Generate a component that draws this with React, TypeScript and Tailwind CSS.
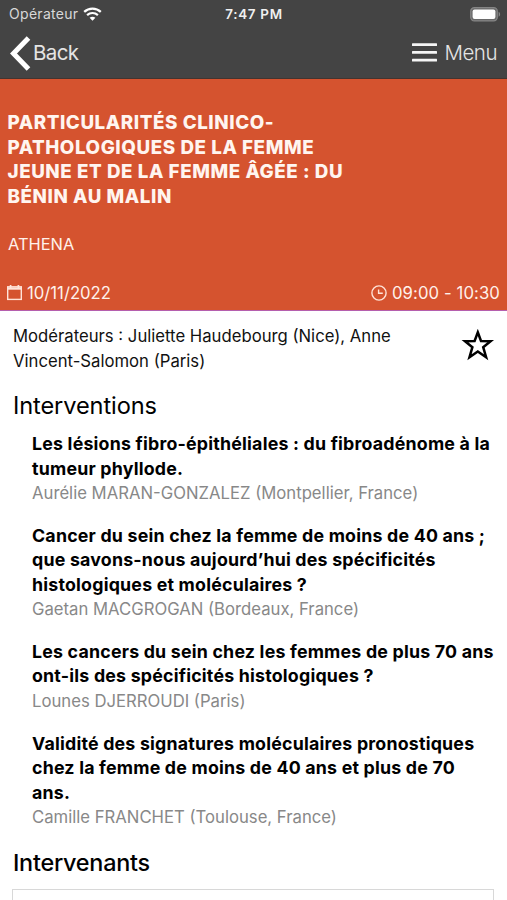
import * as React from 'react';

interface Talk {
  lines: string[];
  speaker: string;
}

const talks: Talk[] = [
  {
    lines: ['Les lésions fibro-épithéliales : du fibroadénome à la', 'tumeur phyllode.'],
    speaker: 'Aurélie MARAN-GONZALEZ (Montpellier, France)',
  },
  {
    lines: [
      'Cancer du sein chez la femme de moins de 40 ans ;',
      'que savons-nous aujourd’hui des spécificités',
      'histologiques et moléculaires ?',
    ],
    speaker: 'Gaetan MACGROGAN (Bordeaux, France)',
  },
  {
    lines: ['Les cancers du sein chez les femmes de plus 70 ans', 'ont-ils des spécificités histologiques ?'],
    speaker: 'Lounes DJERROUDI (Paris)',
  },
  {
    lines: ['Validité des signatures moléculaires pronostiques', 'chez la femme de moins de 40 ans et plus de 70', 'ans.'],
    speaker: 'Camille FRANCHET (Toulouse, France)',
  },
];

function StatusBar() {
  return (
    <div className="grid h-7 grid-cols-3 items-center pl-[9px] pr-[6px] text-[13px]">
      <div className="flex items-center gap-[5px] text-[#d8d8d8]">
        <span className="text-[14px] tracking-[0.3px]">Opérateur</span>
        <svg width="19" height="14" viewBox="0 0 19 14" fill="none" stroke="#fff">
          <path d="M1.2 4.9C5.9.6 13.1.6 17.8 4.9" strokeWidth="2.3" />
          <path d="M4.1 8.1c3.1-2.8 7.7-2.8 10.8 0" strokeWidth="2.2" />
          <path d="M9.5 13.7 6.6 10.8c1.7-1.5 4.1-1.5 5.8 0z" fill="#fff" stroke="none" />
        </svg>
      </div>
      <div className="-ml-[2px] text-center text-[13.4px] font-semibold tracking-[0.7px] text-[#f0f0f0]">7:47 PM</div>
      <div className="flex justify-end">
        <svg width="31" height="15" viewBox="0 0 31 15">
          <rect x=".7" y=".7" width="26.6" height="13.2" rx="3.6" fill="#6a6a6a" stroke="#858585" strokeWidth="1.2" />
          <rect x="2.6" y="2.6" width="22.8" height="9.4" rx="2" fill="#fff" />
          <path d="M28.6 4.8c2 .8 2 4.2 0 5z" fill="#858585" />
        </svg>
      </div>
    </div>
  );
}

function NavBar() {
  return (
    <div className="flex h-[50px] items-center justify-between px-[10px] text-[20.5px] text-[#e4e4e4]">
      <div className="flex items-center gap-[2px]">
        <svg width="21" height="35" viewBox="0 0 21 35" fill="none" stroke="#fff" strokeWidth="5">
          <path d="M18.5 2 3.5 17.5 18.5 33" />
        </svg>
        <span className="tracking-[-0.6px]">Back</span>
      </div>
      <div className="flex items-center gap-[8px]">
        <svg className="-mt-px" width="25" height="19" viewBox="0 0 25 19" fill="#f5f5f5">
          <rect width="25" height="2.7" y=".3" rx=".5" />
          <rect width="25" height="2.7" y="8" rx=".5" />
          <rect width="25" height="2.7" y="15.8" rx=".5" />
        </svg>
        <span className="font-light tracking-[-0.5px]">Menu</span>
      </div>
    </div>
  );
}

export default function App() {
  return (
    <div className="h-[900px] w-[507px] overflow-hidden whitespace-nowrap bg-white font-['Inter','Liberation_Sans',sans-serif] text-[16.7px] leading-[24.5px] text-[#111]">
      <header className="h-[79px] border-b border-[#44342f] bg-[#444]">
        <StatusBar />
        <NavBar />
      </header>

      <section className="h-[232px] border-b border-[#b55fae] bg-[#d5532f] pl-2 pr-[7px] pt-8 text-[#fff1eb]">
        <h1 className="-ml-[0.5px] text-[18.8px] font-extrabold tracking-[0.56px] text-[#fff5f0]">
          PARTICULARITÉS CLINICO-
          <br />
          PATHOLOGIQUES DE LA FEMME
          <br />
          JEUNE ET DE LA FEMME ÂGÉE : DU
          <br />
          BÉNIN AU MALIN
        </h1>
        <p className="mt-[23px] text-[16.4px]">ATHENA</p>
        <div className="mt-[24px] flex justify-between">
          <div className="flex items-center gap-[5px]">
            <svg className="-ml-px" width="15" height="17" viewBox="0 0 15 17" fill="none" stroke="#ffe3d8">
              <rect x=".7" y="2.8" width="13.6" height="12.6" strokeWidth="1.4" />
              <path d="M.7 4.5h13.6" strokeWidth="2.4" />
              <path d="M3.6 1v3.5M11.4 1v3.5" strokeWidth="1.7" />
            </svg>
            <span>10/11/2022</span>
          </div>
          <div className="flex items-center gap-[5px]">
            <svg width="16" height="16" viewBox="0 0 16 16" fill="none" stroke="#ffe3d8" strokeWidth="1.4">
              <circle cx="8" cy="8" r="7.1" />
              <path d="M7.6 4.4v3.8h4.2" />
            </svg>
            <span className="tracking-[0.1px]">09:00 - 10:30</span>
          </div>
        </div>
      </section>

      <main className="px-[13px] pt-[13px]">
        <div className="flex justify-between">
          <p>
            Modérateurs : Juliette Haudebourg (Nice), Anne
            <br />
            Vincent-Salomon (Paris)
          </p>
          <svg className="mt-[4px] -mr-px" width="34" height="34" viewBox="0 0 34 34" fill="none" stroke="#000" strokeWidth="2.5">
            <path d="M16.8 4.3 20 13 29.6 13.2 22.2 19.2 25.1 29.2 16.8 23.5 8.5 29.2 11.4 19.2 4 13.2 13.6 13z" />
          </svg>
        </div>

        <h2 className="mt-[18px] text-[23.6px] leading-[30px] tracking-[-0.1px] text-black">Interventions</h2>
        <ul className="mt-[11px] flex flex-col gap-[18.2px] pl-[19px]">
          {talks.map((talk) => (
            <li key={talk.speaker}>
              <h3 className="text-[17.8px] font-bold tracking-[0.2px] text-black">
                {talk.lines.map((line) => (
                  <span key={line} className="block">
                    {line}
                  </span>
                ))}
              </h3>
              <p className="text-[#888]">{talk.speaker}</p>
            </li>
          ))}
        </ul>

        <h2 className="mt-[18px] text-[23.4px] font-medium leading-[30px] tracking-[-0.25px] text-black">Intervenants</h2>
        <div className="-ml-px mt-[11px] h-20 border border-[#d8d8d8]" />
      </main>
    </div>
  );
}
